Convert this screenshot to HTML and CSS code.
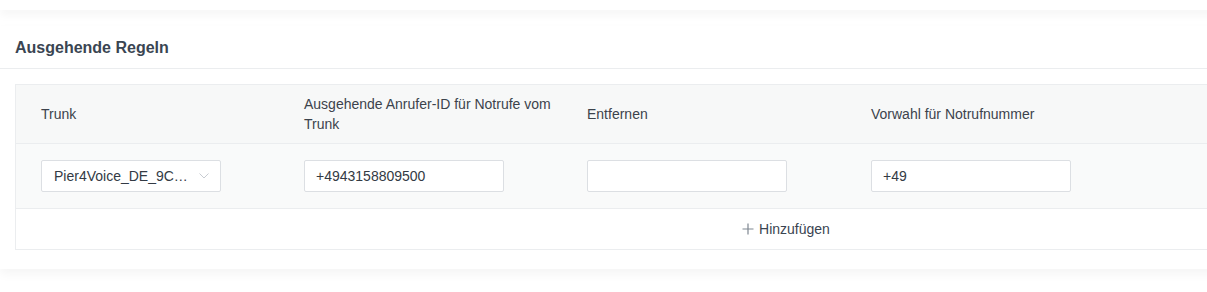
FILE: index.html
```html
<!DOCTYPE html>
<html lang="de">
<head>
    <meta charset="UTF-8">
    <title>Ausgehende Regeln</title>
    <link rel="stylesheet" href="styles.css">
</head>
<body>
    <div class="card card-prev"></div>

    <div class="card">
        <div class="card-header">Ausgehende Regeln</div>
        <div class="card-body">
            <div class="rules">
                <div class="rules-row rules-head">
                    <div class="cell first">Trunk</div>
                    <div class="cell">Ausgehende Anrufer-ID für Notrufe vom Trunk</div>
                    <div class="cell">Entfernen</div>
                    <div class="cell">Vorwahl für Notrufnummer</div>
                    <div class="cell"></div>
                </div>
                <div class="rules-row rules-body">
                    <div class="cell first">
                        <div class="select">
                            <span class="select-value">Pier4Voice_DE_9C…</span>
                            <svg class="select-arrow" width="10" height="6" viewBox="0 0 10 6">
                                <path d="M0.5 0.5 L5 5 L9.5 0.5" fill="none" stroke="#c8ccd2" stroke-width="1"/>
                            </svg>
                        </div>
                    </div>
                    <div class="cell"><input class="field" type="text" value="+4943158809500"></div>
                    <div class="cell"><input class="field" type="text" value=""></div>
                    <div class="cell"><input class="field" type="text" value="+49"></div>
                    <div class="cell"></div>
                </div>
                <div class="rules-add">
                    <button class="add-btn">
                        <svg width="12" height="12" viewBox="0 0 12 12">
                            <path d="M6 0.5 V11.5 M0.5 6 H11.5" stroke="#7f8791" stroke-width="1.2"/>
                        </svg>
                        Hinzufügen
                    </button>
                </div>
            </div>
        </div>
    </div>
</body>
</html>
```

FILE: styles.css
```css
body {
    margin: 0;
    padding: 0;
    background-color: #fff;
    font-family: "Liberation Sans", Arial, sans-serif;
    color: #333a44;
    overflow: hidden;
}

.card {
    background-color: #fff;
    width: 1580px;
    box-shadow: 0 5px 10px rgba(0, 0, 0, 0.045);
    margin-bottom: 16px;
}

.card-prev {
    height: 10px;
}

.card-header {
    height: 42px;
    line-height: 44px;
    padding: 0 15px;
    font-size: 16px;
    font-weight: bold;
    color: #3a4552;
    border-bottom: 1px solid #ebedef;
}

.card-body {
    padding: 15px 0 19px 15px;
}

.rules {
    width: 1540px;
    border: 1px solid #ebedef;
}

.rules-row {
    display: grid;
    grid-template-columns: 272px 283px 284px 284px 1fr;
    border-bottom: 1px solid #ebedef;
}

.rules-head {
    height: 58px;
    background-color: #f7f8f8;
    font-size: 14px;
    line-height: 20px;
    color: #3c434c;
}

.rules-body {
    height: 64px;
    background-color: #f9fafa;
}

.cell {
    display: flex;
    align-items: center;
    padding: 0 16px;
}

.cell.first {
    padding-left: 25px;
}

.rules-head .cell {
    padding-right: 12px;
}

.select,
.field {
    box-sizing: border-box;
    height: 32px;
    background-color: #fff;
    border: 1px solid #dcdfe3;
    border-radius: 2px;
    font-family: "Liberation Sans", Arial, sans-serif;
    font-size: 14px;
    color: #333a44;
}

.select {
    width: 180px;
    display: flex;
    align-items: center;
    justify-content: space-between;
    padding: 0 11px 0 12px;
}

.field {
    width: 200px;
    padding: 0 11px;
    outline: none;
}

.rules-add {
    height: 40px;
    display: flex;
    align-items: center;
    justify-content: center;
}

.add-btn {
    display: flex;
    align-items: center;
    gap: 5px;
    background: none;
    border: none;
    padding: 0;
    font-family: "Liberation Sans", Arial, sans-serif;
    font-size: 14px;
    color: #3a4451;
    cursor: pointer;
}
```
